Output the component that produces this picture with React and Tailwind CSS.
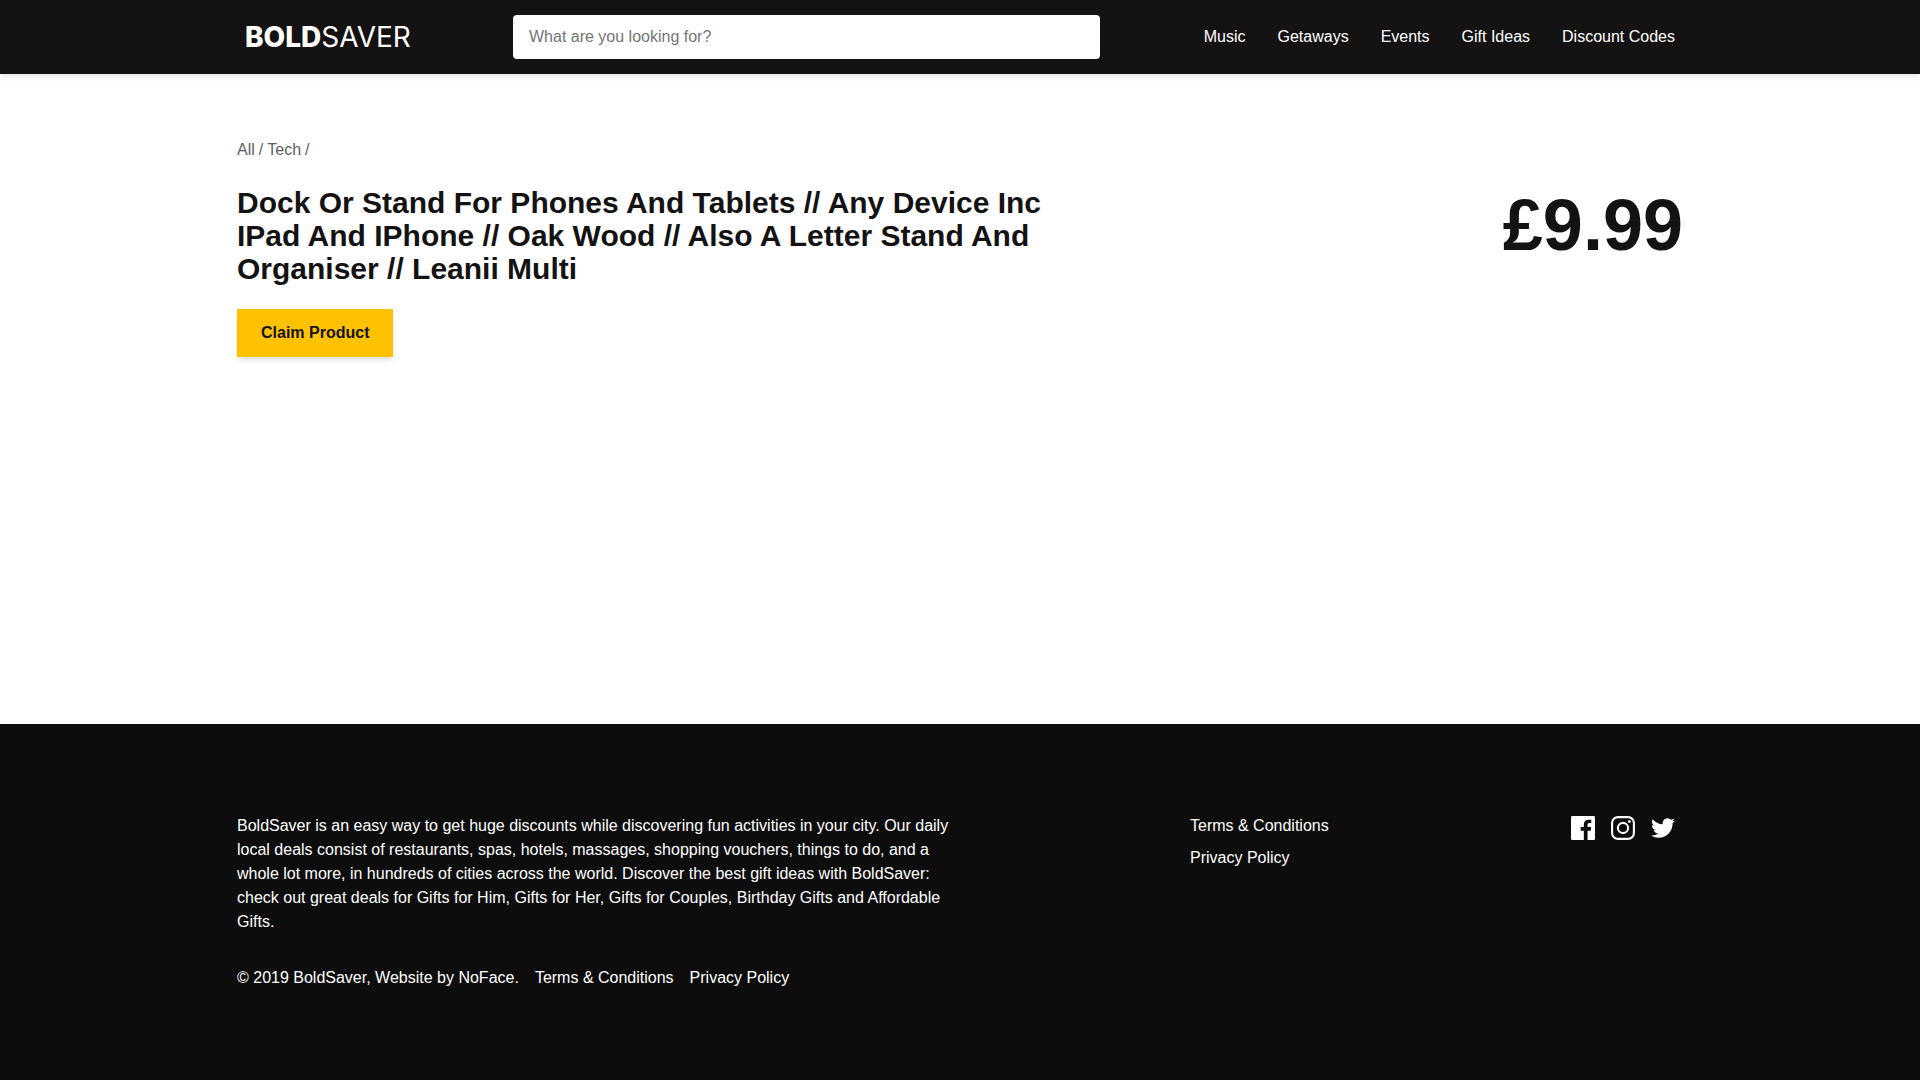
import React from "react";

const navLinks = ["Music", "Getaways", "Events", "Gift Ideas", "Discount Codes"];

function Container({ className = "", children }) {
  return <div className={`mx-auto w-full max-w-[1446px] ${className}`}>{children}</div>;
}

function FacebookIcon() {
  return (
    <svg viewBox="0 0 24 24" className="size-6" fill="currentColor" aria-hidden="true">
      <path d="M22.676 0H1.324C.593 0 0 .593 0 1.324v21.352C0 23.408.593 24 1.324 24h11.494v-9.294H9.689v-3.621h3.129V8.41c0-3.099 1.894-4.785 4.659-4.785 1.325 0 2.464.097 2.796.141v3.24h-1.921c-1.5 0-1.792.721-1.792 1.771v2.311h3.584l-.465 3.63H16.56V24h6.115c.733 0 1.325-.592 1.325-1.324V1.324C24 .593 23.408 0 22.676 0" />
    </svg>
  );
}

function InstagramIcon() {
  return (
    <svg viewBox="0 0 24 24" className="size-6" fill="none" stroke="currentColor" strokeWidth="2.1" aria-hidden="true">
      <rect x="1.1" y="1.1" width="21.8" height="21.8" rx="6" />
      <circle cx="12" cy="12" r="5.1" />
      <circle cx="18.4" cy="5.6" r="1.44" fill="currentColor" stroke="none" />
    </svg>
  );
}

function TwitterIcon() {
  return (
    <svg viewBox="0 0 24 24" className="size-6" fill="currentColor" aria-hidden="true">
      <path d="M23.954 4.569a10 10 0 0 1-2.825.775 4.958 4.958 0 0 0 2.163-2.723c-.951.555-2.005.959-3.127 1.184a4.92 4.92 0 0 0-8.384 4.482C7.691 8.094 4.066 6.13 1.64 3.161a4.822 4.822 0 0 0-.666 2.475c0 1.71.87 3.213 2.188 4.096a4.904 4.904 0 0 1-2.228-.616v.061a4.923 4.923 0 0 0 3.946 4.827 4.996 4.996 0 0 1-2.212.085 4.937 4.937 0 0 0 4.604 3.417 9.868 9.868 0 0 1-6.102 2.105c-.39 0-.779-.023-1.17-.067a13.995 13.995 0 0 0 7.557 2.209c9.054 0 13.999-7.496 13.999-13.986 0-.209 0-.42-.015-.63a9.936 9.936 0 0 0 2.46-2.548l-.047-.02z" />
    </svg>
  );
}

function Header() {
  return (
    <header className="relative bg-[#141213] py-[15px] text-white shadow-[0_2px_6px_rgba(0,0,0,0.12)]">
      <Container className="flex items-center justify-between px-2">
        <a href="#" className="flex w-[268px] text-[28px] leading-8 font-['Inter',sans-serif]">
          <span className="font-extrabold">BOLD</span>
          <span className="font-normal">SAVER</span>
        </a>
        <input
          type="search"
          aria-label="Search"
          placeholder="What are you looking for?"
          className="h-11 max-w-[587px] flex-1 rounded bg-white px-4 text-black placeholder:text-[#757575]"
        />
        <nav className="ml-[104px] flex gap-8">
          {navLinks.map((label) => (
            <a key={label} href="#" className="whitespace-nowrap">
              {label}
            </a>
          ))}
        </nav>
      </Container>
    </header>
  );
}

function Product() {
  return (
    <main className="flex-1">
      <Container className="pt-16">
        <nav aria-label="Breadcrumb" className="flex gap-1 text-[#606060]">
          <a href="#">All</a>
          <span>/</span>
          <a href="#">Tech</a>
          <span>/</span>
        </nav>
        <div className="mt-6 flex items-start justify-between">
          <div className="w-7/12">
            <h1 className="text-[30px] leading-[33px] font-bold">
              Dock Or Stand For Phones And Tablets // Any Device Inc IPad And IPhone // Oak Wood // Also
              A Letter Stand And Organiser // Leanii Multi
            </h1>
            <button
              type="button"
              className="mt-6 h-12 bg-[#ffc200] px-6 font-bold shadow-md"
            >
              Claim Product
            </button>
          </div>
          <p className="text-[72px] leading-[79px] font-bold">£9.99</p>
        </div>
      </Container>
    </main>
  );
}

function Footer() {
  return (
    <footer className="bg-[#0d0d0d] py-[90px] text-white">
      <Container className="flex">
        <div className="w-1/2">
          <p>
            BoldSaver is an easy way to get huge discounts while discovering fun activities in your city.
            Our daily local deals consist of restaurants, spas, hotels, massages, shopping vouchers,
            things to do, and a whole lot more, in hundreds of cities across the world. Discover the best
            gift ideas with BoldSaver: check out great deals for Gifts for Him, Gifts for Her, Gifts for
            Couples, Birthday Gifts and Affordable Gifts.
          </p>
          <div className="mt-8 flex gap-4">
            <p>© 2019 BoldSaver, Website by NoFace.</p>
            <a href="#">Terms &amp; Conditions</a>
            <a href="#">Privacy Policy</a>
          </div>
        </div>
        <div className="flex flex-1 items-start justify-between pr-2 pl-[230px]">
          <nav aria-label="Legal" className="flex flex-col gap-2">
            <a href="#">Terms &amp; Conditions</a>
            <a href="#">Privacy Policy</a>
          </nav>
          <div className="flex gap-4 pt-0.5">
            <a href="#" aria-label="Facebook">
              <FacebookIcon />
            </a>
            <a href="#" aria-label="Instagram">
              <InstagramIcon />
            </a>
            <a href="#" aria-label="Twitter">
              <TwitterIcon />
            </a>
          </div>
        </div>
      </Container>
    </footer>
  );
}

export default function App() {
  return (
    <div className="flex min-h-screen flex-col bg-white font-['Liberation_Sans',Arial,sans-serif] text-base text-[#141213]">
      <Header />
      <Product />
      <Footer />
    </div>
  );
}
